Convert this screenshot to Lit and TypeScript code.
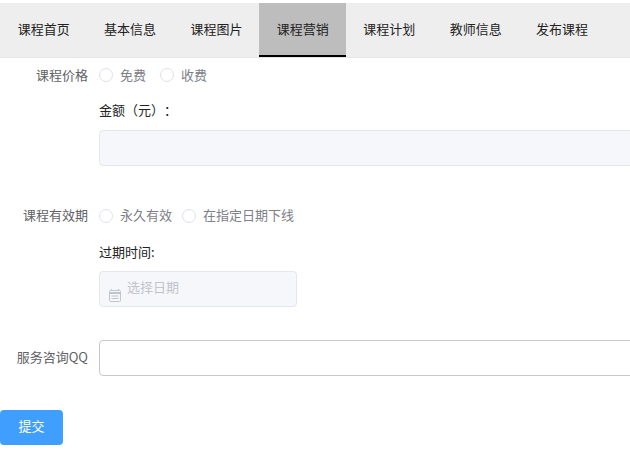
import { LitElement, html, css } from "lit";
import { customElement } from "lit/decorators.js";

@customElement("app-root")
export class AppRoot extends LitElement {
  static styles = css`
    :host { display: block; width: 630px; height: 450px; overflow: hidden; background: #fff; font-family: "Noto Sans CJK SC", "Liberation Sans", sans-serif; font-size: 13px; line-height: 20px; text-spacing-trim: space-all; }
    .nav { display: flex; margin-top: 3px; height: 54px; background: #eeeeee; border-bottom: 1px solid #e6e6e6; }
    .tab { width: 86.4px; height: 54px; box-sizing: border-box; display: flex; align-items: center; justify-content: center; color: #222; padding-left: 1px; padding-bottom: 3px; }
    .tab.active { background: #bdbdbd; border-bottom: 2px solid #000; padding-bottom: 1px; }
    .form { display: flex; flex-direction: column; }
    .row { display: flex; align-items: center; }
    .label { width: 88px; box-sizing: border-box; text-align: right; color: #606266; flex: none; }
    .r3 .label { padding-bottom: 2px; }
    .radios { display: flex; align-items: center; margin-left: 11px; color: #7d8087; }
    .radio { width: 12px; height: 12px; border: 1px solid #dfe2ea; border-radius: 50%; background: #fff; margin-right: 7px; flex: none; }
    .gap-wide { margin-right: 14px; }
    .gap-narrow { margin-right: 10px; }
    .sub { margin-left: 99px; color: #222; }
    .field { margin-left: 99px; box-sizing: border-box; background: #f5f7fa; border: 1px solid #e4e7ed; border-radius: 4px; }
    .amount { height: 36px; width: 600px; margin-top: 10px; flex: none; }
    .date { height: 36px; width: 198px; margin-top: 9px; display: flex; align-items: center; color: #c0c4cc; flex: none; }
    .date svg { margin: 13px 6px 0 9px; flex: none; }
    .date span { margin-top: -4px; }
    .qq { height: 36px; width: 600px; margin-left: 11px; box-sizing: border-box; border: 1px solid #c8c8c8; border-radius: 4px; background: #fff; flex: none; }
    .submit { width: 63px; height: 35px; box-sizing: border-box; padding-bottom: 3px; background: #409eff; border-radius: 4px; color: #fff; display: flex; align-items: center; justify-content: center; margin-top: 34px; }
    .r1 { height: 20px; margin-top: 7px; }
    .s1 { height: 20px; margin-top: 15px; display: flex; align-items: center; }
    .r2 { height: 20px; margin-top: 40px; }
    .r2 .label, .r2 .gap-narrow, .r2 .last { padding-bottom: 2px; }
    .s2 { height: 20px; margin-top: 16px; display: flex; align-items: center; }
    .r3 { margin-top: 33px; }
  `;

  render() {
    const tabs = ["课程首页", "基本信息", "课程图片", "课程营销", "课程计划", "教师信息", "发布课程"];
    return html`
      <div class="nav">
        ${tabs.map((t, i) => html`<div class="tab ${i === 3 ? "active" : ""}">${t}</div>`)}
      </div>
      <div class="form">
        <div class="row r1">
          <div class="label">课程价格</div>
          <div class="radios">
            <span class="radio"></span><span class="gap-wide">免费</span>
            <span class="radio"></span><span>收费</span>
          </div>
        </div>
        <div class="sub s1">金额（元）：</div>
        <div class="field amount"></div>
        <div class="row r2">
          <div class="label">课程有效期</div>
          <div class="radios">
            <span class="radio"></span><span class="gap-narrow">永久有效</span>
            <span class="radio"></span><span class="last">在指定日期下线</span>
          </div>
        </div>
        <div class="sub s2">过期时间:</div>
        <div class="field date">
          <svg width="12" height="13" viewBox="0 0 12 13" fill="none" stroke="#c0c4cc">
            <rect x="0.5" y="1.5" width="11" height="11" rx="1"></rect>
            <path d="M0.5 4h11" stroke-width="2"></path>
            <path d="M2.5 0v2M9.5 0v2M2.5 7h7M2.5 9.5h7"></path>
          </svg>
          <span>选择日期</span>
        </div>
        <div class="row r3">
          <div class="label">服务咨询QQ</div>
          <div class="qq"></div>
        </div>
        <div class="submit">提交</div>
      </div>
    `;
  }
}
